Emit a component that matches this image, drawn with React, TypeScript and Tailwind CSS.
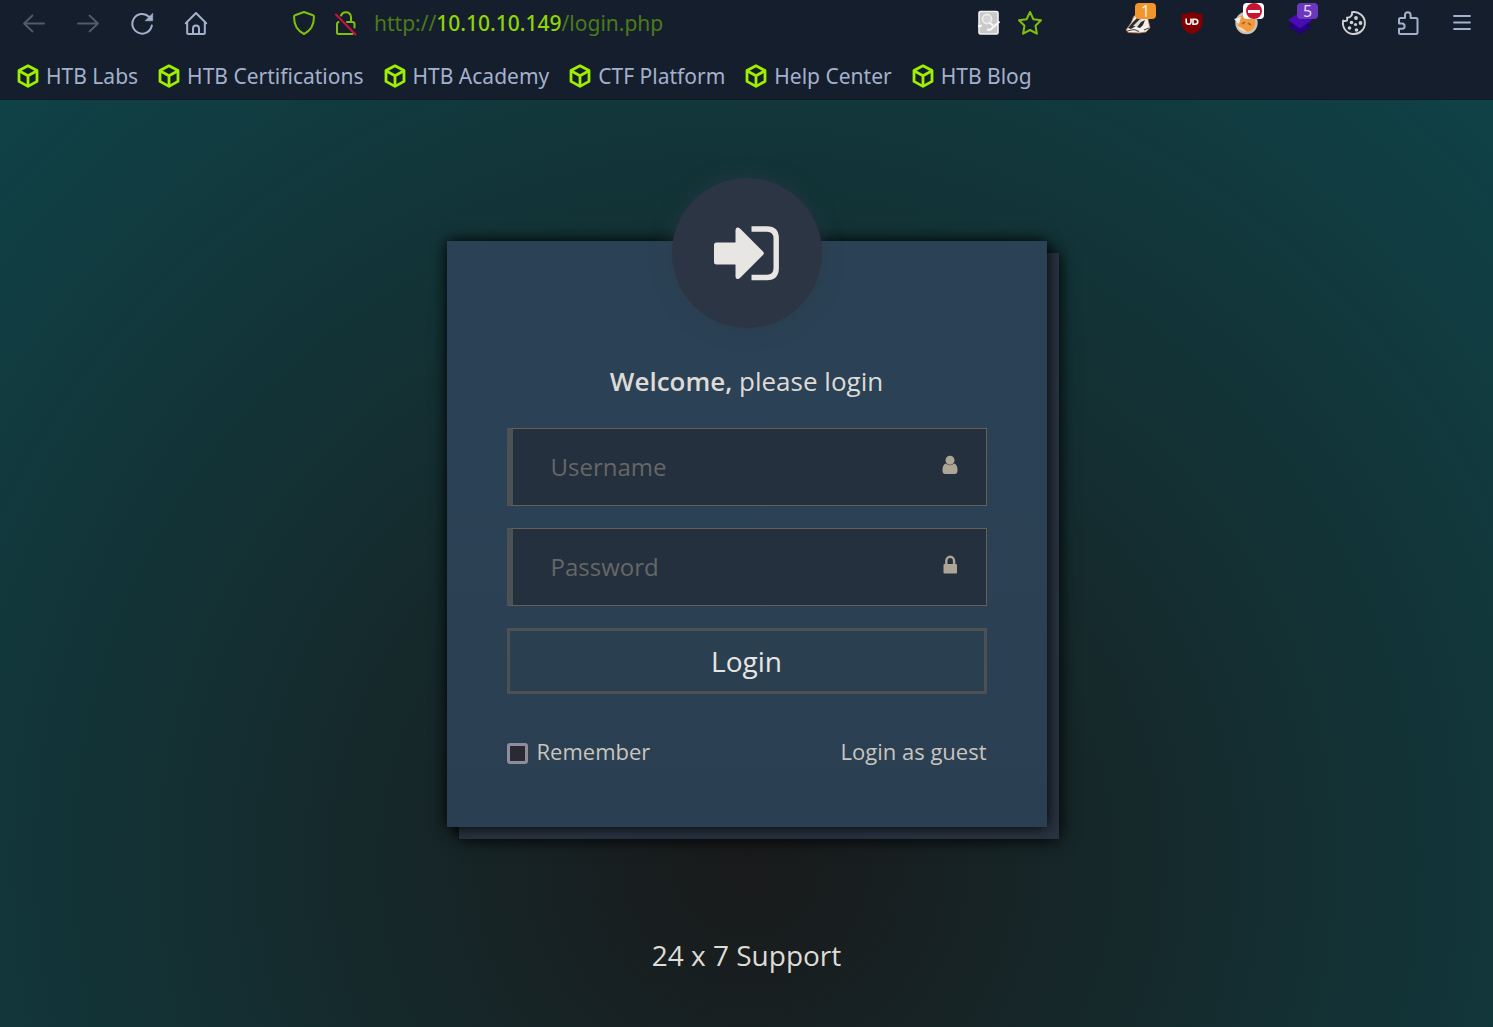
import React, { useState } from "react";

const navBtn = "relative flex h-10 w-[54px] shrink-0 items-center justify-center";
const urlBtn = "flex h-10 w-[42px] shrink-0 items-center justify-center";

function CubeIcon() {
  return (
    <svg width="22" height="24" viewBox="0 0 22 24" fill="none" stroke="#9fef00" strokeWidth="2.800" strokeLinejoin="round" aria-hidden="true">
      <path d="M11 1.800 20 6.600V17.400L11 22.400 2 17.400V6.600Z" />
      <path d="M2.400 7 11 11.800 19.600 7M11 11.800V22" />
    </svg>
  );
}

function BackIcon() {
  return (
    <svg width="24" height="24" viewBox="0 0 24 24" fill="none" stroke="#515b6b" strokeWidth="1.800" strokeLinecap="round" strokeLinejoin="round" aria-hidden="true">
      <path d="M22 12.500H2M10.500 4.500 2 12.500 10.500 20.500" />
    </svg>
  );
}

function ForwardIcon() {
  return (
    <svg width="24" height="24" viewBox="0 0 24 24" fill="none" stroke="#515b6b" strokeWidth="1.800" strokeLinecap="round" strokeLinejoin="round" aria-hidden="true">
      <path d="M2 12.500H22M13.500 4.500 22 12.500 13.500 20.500" />
    </svg>
  );
}

function ReloadIcon() {
  return (
    <svg width="24" height="24" viewBox="0 0 24 24" fill="none" stroke="#a4b1cd" strokeWidth="2" strokeLinecap="round" aria-hidden="true">
      <path d="M19 5.800A9.800 9.800 0 1 0 21.800 14.500" />
      <path d="M22.700 2.500V9.800H15.400Z" fill="#a4b1cd" strokeWidth="0.600" strokeLinejoin="round" />
    </svg>
  );
}

function HomeIcon() {
  return (
    <svg width="24" height="24" viewBox="0 0 24 24" fill="none" stroke="#a4b1cd" strokeWidth="2" strokeLinecap="round" strokeLinejoin="round" aria-hidden="true">
      <path d="M1.800 12.200 12 2 22.200 12.200M3.200 11V22Q3.200 23 4.200 23H19.800Q20.800 23 20.800 22V11" />
      <path d="M9 22.500V17.500A3 3 0 0 1 15 17.500V22.500" />
    </svg>
  );
}

function ShieldIcon() {
  return (
    <svg width="24" height="26" viewBox="0 0 24 26" fill="none" stroke="#80c00c" strokeWidth="2" strokeLinejoin="round" aria-hidden="true">
      <path d="M12 2 21 5.200Q22 5.600 22 6.600C22 14.500 19.500 20.500 12 24 4.500 20.500 2 14.500 2 6.600Q2 5.600 3 5.200Z" />
    </svg>
  );
}

function InsecureIcon() {
  return (
    <svg width="24" height="26" viewBox="0 0 24 26" fill="none" strokeWidth="2" strokeLinecap="round" strokeLinejoin="round" aria-hidden="true">
      <g stroke="#80c00c">
        <path d="M7 5.500A5.200 5.200 0 0 1 17 7V12" />
        <path d="M13 12H18.500Q20.500 12 20.500 14V17.500M4.500 12Q3 12.500 3 14V22.500Q3 24 4.500 24H18.500" />
      </g>
      <path d="M2 4.500 21.500 24.500" stroke="#d0103a" />
    </svg>
  );
}

function ReaderIcon() {
  return (
    <svg width="24" height="26" viewBox="0 0 24 26" fill="none" aria-hidden="true">
      <rect x="3" y="1.500" width="19" height="22.500" rx="1.500" fill="#c9c9c9" stroke="#f2f2f2" strokeWidth="1.600" />
      <circle cx="11" cy="9" r="4.600" fill="#d4d4d4" stroke="#efefef" strokeWidth="1.600" />
      <path d="M2 16.500 6 15.500M14 13 17 15.500M11 19.500 14 20 23.500 11.500" stroke="#fafafa" strokeWidth="2" />
    </svg>
  );
}

function StarIcon() {
  return (
    <svg width="26" height="26" viewBox="0 0 26 26" fill="none" stroke="#80c00c" strokeWidth="2" strokeLinejoin="round" aria-hidden="true">
      <path d="M13 2 16.400 9.200 24 10.200 18.500 15.700 19.900 23.700 13 20 6.100 23.700 7.500 15.700 2 10.200 9.600 9.200Z" />
    </svg>
  );
}

function BadgerIcon() {
  return (
    <svg width="26" height="26" viewBox="0 0 26 26" aria-hidden="true">
      <path d="M1 20 6 13 9 6 15 4 23 9 25 18 21 22 14 23 3 22.500Z" fill="#f5f1ea" stroke="#ba7545" strokeWidth="0.800" />
      <path d="M3 18 8 12 13 7 17 8 11 16 6 19Z" fill="#292b2e" />
      <path d="M12 17 16 12 20 10 18 15 15 18Z" fill="#29292b" />
      <path d="M2 21 9 19.500 14 21.500M19 20 24 18" stroke="#4d4b48" strokeWidth="1.200" fill="none" />
      <path d="M8 16 15 9 17 10 12 16.500Z" fill="#dedbd5" />
    </svg>
  );
}

function UblockIcon() {
  return (
    <svg width="24" height="26" viewBox="0 0 24 26" fill="none" aria-hidden="true">
      <path d="M12 1.500Q16 4 22.500 4V13Q22 20.500 12 24.500 2 20.500 1.500 13V4Q8 4 12 1.500Z" fill="#800000" />
      <path d="M6.200 8.500V11.800Q6.200 14.200 8.600 14.200T11 11.800V8.500" stroke="#fff" strokeWidth="1.600" />
      <path d="M13 9.200V14.200H14.800Q17.800 14.200 17.800 11.700T14.800 9.200Z" stroke="#fff" strokeWidth="1.600" />
    </svg>
  );
}

function FoxIcon() {
  return (
    <svg width="26" height="26" viewBox="0 0 26 26" fill="none" aria-hidden="true">
      <circle cx="13.500" cy="13" r="10" fill="#f39a3c" stroke="#c8c3ba" strokeWidth="2.400" />
      <path d="M1 9 8 7 6 14Z" fill="#f6efe6" />
      <path d="M9 14 12 12M15 13 18 15" stroke="#a9642b" strokeWidth="1.600" />
      <path d="M4 16Q8 22 14 22L9 18Z" fill="#f6dec1" />
    </svg>
  );
}

function LayersIcon() {
  return (
    <svg width="26" height="26" viewBox="0 0 26 26" aria-hidden="true">
      <path d="M1 16 13 8 25 16 13 24.500Z" fill="#25017d" />
      <path d="M1 10 13 2 25 10 13 18.500Z" fill="#4a0bb5" />
    </svg>
  );
}

function CookieIcon() {
  return (
    <svg width="26" height="26" viewBox="0 0 26 26" fill="none" stroke="#d3d3d3" strokeWidth="1.900" strokeLinejoin="round" aria-hidden="true">
      <path d="M11 2.200A11 11 0 1 1 2.200 10.500Q4 11.800 6 10.500 6.500 8.500 6 7.500 8.500 8 10 6 11.500 4.500 11 2.200Z" />
      <g fill="#d3d3d3" stroke="none">
        <circle cx="15" cy="8" r="1.900" />
        <circle cx="10.500" cy="12.500" r="1.800" />
        <circle cx="19.500" cy="13" r="1.900" />
        <circle cx="14.500" cy="14.500" r="1.600" />
        <circle cx="8.500" cy="18" r="1.800" />
        <circle cx="15.500" cy="20" r="1.800" />
      </g>
    </svg>
  );
}

function PuzzleIcon() {
  return (
    <svg width="24" height="26" viewBox="0 0 24 26" fill="none" stroke="#a4b1cd" strokeWidth="2" strokeLinejoin="round" aria-hidden="true">
      <path d="M9 8V5A2.800 2.800 0 0 1 14.600 5V8H20Q21.500 8 21.500 9.500V22.500Q21.500 24 20 24H4.500Q3 24 3 22.500V18.800H6A2.600 2.600 0 0 0 6 13.600H3V9.500Q3 8 4.500 8Z" />
    </svg>
  );
}

function MenuIcon() {
  return (
    <svg width="20" height="18" viewBox="0 0 20 18" stroke="#a4b1cd" strokeWidth="1.800" strokeLinecap="round" aria-hidden="true">
      <path d="M2 2H18M2 8.500H18M2 15H18" />
    </svg>
  );
}

function SignInIcon() {
  return (
    <svg width="66" height="55" viewBox="0 0 66 55" aria-hidden="true">
      <path
        d="M2.500 16.500H21.500V4Q21.500 1.500 23.500 1.500 25 1.500 26 2.500L49.200 25.800Q50.500 27.300 49.200 28.800L26 52Q25 53 23.500 53 21.500 53 21.500 50.500V38.500H2.500Q0 38.500 0 36V19Q0 16.500 2.500 16.500Z"
        fill="#e8e6e2"
      />
      <path d="M37.500 3H53Q62.200 3 62.200 12.500V42Q62.200 51.500 53 51.500H37.500" fill="none" stroke="#e8e6e2" strokeWidth="5.400" />
    </svg>
  );
}

function UserIcon() {
  return (
    <svg width="16" height="20" viewBox="0 0 16 20" fill="#ada596" aria-hidden="true">
      <circle cx="8" cy="5.300" r="4.500" />
      <path d="M3.800 8.600Q8 12 12.200 8.600 15.500 9.500 15.500 15.500 15.500 19 12.700 19H3.300Q.5 19 .5 15.500.5 9.500 3.800 8.600Z" />
    </svg>
  );
}

function LockIcon() {
  return (
    <svg width="16" height="20" viewBox="0 0 16 20" aria-hidden="true">
      <path d="M4.300 10V6A3.900 4.200 0 0 1 12.100 6V10" fill="none" stroke="#ada596" strokeWidth="2.400" />
      <rect x="1.500" y="9" width="13.500" height="9.500" rx="1" fill="#ada596" />
    </svg>
  );
}

const bookmarks = ["HTB Labs", "HTB Certifications", "HTB Academy", "CTF Platform", "Help Center", "HTB Blog"];

function BrowserBar() {
  const [url, setUrl] = useState("http://10.10.10.149/login.php");
  const [, scheme, host, path] = url.match(/^(\w+:\/\/)?([^/]*)(.*)$/) ?? ["", "", url, ""];
  return (
    <header className="border-b border-[#101925] bg-[#151e2c] font-['Noto_Sans',sans-serif]">
      <div className="flex h-[46px] items-center pr-1 pl-[7px]">
        <button className={navBtn} aria-label="Back"><BackIcon /></button>
        <button className={navBtn} aria-label="Forward"><ForwardIcon /></button>
        <button className={navBtn} aria-label="Reload"><ReloadIcon /></button>
        <button className={navBtn} aria-label="Home"><HomeIcon /></button>
        <div className="mx-[60px] flex min-w-0 flex-1 items-center">
          <button className={urlBtn} aria-label="Tracking protection"><ShieldIcon /></button>
          <button className={urlBtn} aria-label="Connection not secure"><InsecureIcon /></button>
          <div className="relative min-w-0 flex-1 text-[21px] leading-8">
            <input
              aria-label="Address"
              value={url}
              onChange={(e) => setUrl(e.target.value)}
              className="w-full bg-transparent px-[7px] text-transparent caret-[#9fef00] outline-none"
            />
            <div aria-hidden="true" className="pointer-events-none absolute inset-0 overflow-hidden px-[7px] whitespace-nowrap text-[#4b7a1b]">
              {scheme}
              <span className="font-medium text-[#8fd405]">{host}</span>
              {path}
            </div>
          </div>
          <button className={urlBtn} aria-label="Reader"><ReaderIcon /></button>
          <button className={urlBtn} aria-label="Bookmark this page"><StarIcon /></button>
        </div>
        <button className={navBtn} aria-label="Privacy Badger">
          <BadgerIcon />
          <span className="absolute top-0 right-[9px] flex h-4 w-[21px] items-center justify-center rounded-sm bg-[#f0962b] text-base leading-4 text-[#fff3e0]">1</span>
        </button>
        <button className={navBtn} aria-label="uBlock"><UblockIcon /></button>
        <button className={navBtn} aria-label="FoxyProxy">
          <FoxIcon />
          <span className="absolute top-0 right-[9px] flex h-4 w-[21px] items-center justify-center rounded-sm bg-white">
            <span className="flex size-4 items-center justify-center rounded-full bg-[#c4162f]">
              <span className="h-[3px] w-3 bg-white" />
            </span>
          </span>
        </button>
        <button className={navBtn} aria-label="Wappalyzer">
          <LayersIcon />
          <span className="absolute top-0 right-[9px] flex h-4 w-[21px] items-center justify-center rounded-sm bg-[#6b38bd] text-base leading-4 text-[#e6dcf7]">5</span>
        </button>
        <button className={navBtn} aria-label="Cookie editor"><CookieIcon /></button>
        <button className={navBtn} aria-label="Extensions"><PuzzleIcon /></button>
        <button className={navBtn} aria-label="Menu"><MenuIcon /></button>
      </div>
      <nav className="flex h-[53px] items-center gap-5 overflow-hidden pt-[6px] pl-[17px] text-[21px] leading-8 whitespace-nowrap text-[#a4b1cd]" aria-label="Bookmarks">
        {bookmarks.map((b) => (
          <a key={b} href="#" className="flex items-center gap-[7px]">
            <CubeIcon />
            {b}
          </a>
        ))}
      </nav>
    </header>
  );
}

function Field({ label, type, icon }: { label: string; type: string; icon: React.ReactNode }) {
  return (
    <label className="flex h-[78px] items-center border border-l-[6px] border-[#655f57] border-l-[#4d5153] bg-[#24303d] pr-7 pl-[38px]">
      <input
        type={type}
        aria-label={label}
        placeholder={label}
        className="min-w-0 flex-1 bg-transparent text-2xl text-[#e8e6e2] outline-none placeholder:text-[#666766]"
      />
      <span className="pb-1">{icon}</span>
    </label>
  );
}

export default function App() {
  return (
    <div className="flex min-h-screen flex-col bg-[#11383b]">
      <BrowserBar />
      <main className="flex flex-1 flex-col items-center bg-[radial-gradient(circle_farthest-corner_at_50%_763px,#191a1b,#0f4247)] px-4 pt-[141px] font-['Open_Sans',sans-serif] text-[#dedbd6]">
        <form
          onSubmit={(e) => e.preventDefault()}
          className="relative w-full max-w-[600px] bg-[linear-gradient(#2b4256,#2b3f52)] px-[60px] pt-[122px] pb-[60px] shadow-[0_0_14px_#000000,12px_12px_0_#293341,12px_12px_16px_#000000]"
        >
          <div className="absolute -top-[63px] left-1/2 flex size-[150px] -translate-x-1/2 items-center justify-center rounded-full bg-[#2b3544] shadow-[0_0_20px_#2b3b4699]">
            <SignInIcon />
          </div>
          <h1 className="text-center text-[26px] leading-9">
            <strong className="font-semibold">Welcome,</strong> please login
          </h1>
          <div className="mt-[29px] flex flex-col gap-[22px]">
            <Field label="Username" type="text" icon={<UserIcon />} />
            <Field label="Password" type="password" icon={<LockIcon />} />
            <button type="submit" className="h-[66px] border-[3px] border-[#4d5153] bg-[#2a4051] text-[28px] leading-9 text-[#e8e6e2]">
              Login
            </button>
          </div>
          <div className="mt-[41px] flex items-center justify-between text-[22px] leading-8 text-[#c9c5be]">
            <label className="flex items-center gap-[9px]">
              <input type="checkbox" className="mt-1 size-[21px] appearance-none rounded-[3px] border-[3px] border-[#8f8d9c] bg-[#2b2a33] checked:bg-[#8f8d9c]" />
              Remember
            </label>
            <a href="#">Login as guest</a>
          </div>
        </form>
        <a href="#" className="mt-[110px] text-[28px] leading-9">24 x 7 Support</a>
      </main>
    </div>
  );
}
